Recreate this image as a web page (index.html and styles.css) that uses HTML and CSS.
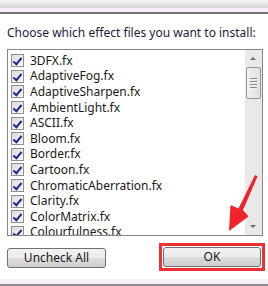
FILE: index.html
```html
<!DOCTYPE html>
<html>
<head>
<meta charset="utf-8">
<link rel="stylesheet" href="styles.css">
</head>
<body>
<div class="window">
  <div class="titlebar"></div>
  <div class="band"></div>
  <div class="rule"></div>
  <div class="content">
    <div class="label">Choose which effect files you want to install:</div>
    <div class="list">
      <ul class="items">
        <li><span class="cb"></span>3DFX.fx</li>
        <li><span class="cb"></span>AdaptiveFog.fx</li>
        <li><span class="cb"></span>AdaptiveSharpen.fx</li>
        <li><span class="cb"></span>AmbientLight.fx</li>
        <li><span class="cb"></span>ASCII.fx</li>
        <li><span class="cb"></span>Bloom.fx</li>
        <li><span class="cb"></span>Border.fx</li>
        <li><span class="cb"></span>Cartoon.fx</li>
        <li><span class="cb"></span>ChromaticAberration.fx</li>
        <li><span class="cb"></span>Clarity.fx</li>
        <li><span class="cb"></span>ColorMatrix.fx</li>
        <li><span class="cb"></span>Colourfulness.fx</li>
      </ul>
      <div class="scrollbar">
        <div class="arrow up"></div>
        <div class="thumb"><span></span><span></span><span></span><span></span></div>
        <div class="track"></div>
        <div class="arrow down"></div>
      </div>
    </div>
    <div class="buttons">
      <button class="btn uncheck">Uncheck All</button>
      <div class="highlight"><button class="btn ok">OK</button></div>
    </div>
  </div>
  <div class="band bottom"></div>
  <div class="rule bottomrule"></div>
  <svg class="redarrow" width="268" height="286" viewBox="0 0 268 286">
    <polygon points="255,175 257.5,176.5 243,210 248.5,216.5 229,231 230.5,205 238.5,208.5" fill="#f0222a"/>
  </svg>
</div>
</body>
</html>
```

FILE: styles.css
```css
* { box-sizing: border-box; }
html, body { margin: 0; padding: 0; background: #ffffff; }
body { width: 268px; height: 286px; overflow: hidden; font-family: "Noto Sans", "Open Sans", sans-serif; font-size: 12px; color: #1a1a1a; }
.window { position: relative; width: 268px; height: 286px; display: flex; flex-direction: column; }
.titlebar { height: 8px; background: linear-gradient(#f4f4f4, #d4d4d4); }
.band { height: 4px; background: #f7eff7; }
.rule { height: 2px; background: #707070; }
.content { flex: 1; padding: 0 5px 0 7px; display: flex; flex-direction: column; }
.label { height: 35px; line-height: 14px; padding-top: 12px; color: #1f1a3a; white-space: nowrap; }
.list { height: 187px; border: 1px solid #828790; display: flex; overflow: hidden; }
.items { flex: 1; list-style: none; margin: 0; padding: 3px 0 0 3px; overflow: hidden; }
.items li { height: 15.6px; display: flex; align-items: center; white-space: nowrap; line-height: 14px; }
.cb { width: 13px; height: 13px; border: 1px solid #8e8f8f; background: linear-gradient(135deg, #dcdcdc, #f8f8f8); margin-right: 6px; flex: none; position: relative; }
.cb::after { content: ""; position: absolute; left: 3px; top: 1px; width: 3px; height: 7px; border: solid #1f2a8c; border-width: 0 2px 2px 0; transform: rotate(40deg); }
.scrollbar { width: 17px; background: #e9e9e9; display: flex; flex-direction: column; align-items: center; }
.arrow { height: 17px; width: 17px; position: relative; flex: none; }
.arrow::after { content: ""; position: absolute; left: 5px; border-left: 3.5px solid transparent; border-right: 3.5px solid transparent; }
.arrow.up::after { top: 7px; border-bottom: 3px solid #6a6a6a; }
.arrow.down::after { top: 7px; border-top: 3px solid #6a6a6a; }
.thumb { width: 15px; height: 32px; border: 1px solid #979797; border-radius: 2px; background: linear-gradient(90deg, #f2f2f2, #e0e0e0); display: flex; flex-direction: column; align-items: center; justify-content: center; gap: 1px; flex: none; }
.thumb span { width: 7px; height: 1px; background: #8a8a8a; border-bottom: 1px solid #f4f4f4; box-sizing: content-box; }
.track { flex: 1; }
.buttons { display: flex; justify-content: space-between; padding-top: 7px; height: 42px; align-items: flex-start; }
.btn { font-family: inherit; font-size: 12px; color: #1a1a1a; height: 20px; border: 1px solid #707070; border-radius: 3px; background: linear-gradient(#f2f2f2 0%, #ebebeb 50%, #dddddd 51%, #cfcfcf 100%); padding: 0; line-height: 16px; }
.uncheck { width: 99px; margin-top: 5px; }
.highlight { border: 3px solid #ee2f33; padding: 1px; margin-right: -2px; }
.ok { width: 98px; display: block; }
.bottom { height: 5px; }
.bottomrule { height: 2px; background: #8a8a8a; }
.redarrow { position: absolute; left: 0; top: 0; pointer-events: none; }
```
